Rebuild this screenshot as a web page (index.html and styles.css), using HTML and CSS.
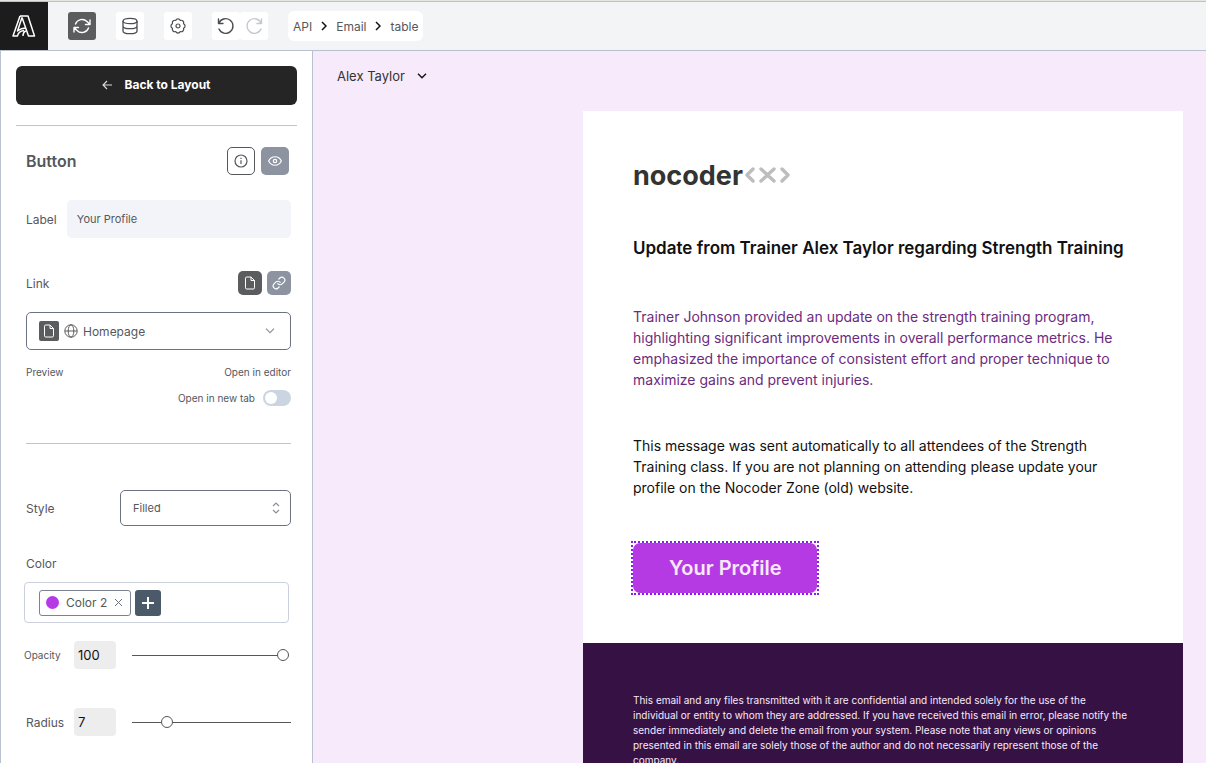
FILE: index.html
```html
<!DOCTYPE html>
<html lang="en">
<head>
<meta charset="utf-8">
<meta name="viewport" content="width=device-width, initial-scale=1">
<title>Email editor</title>
<link rel="stylesheet" href="styles.css">
</head>
<body>
<div class="app">
  <header class="topbar">
    <a class="brand" href="#" aria-label="Home">
      <svg width="26" height="26" viewBox="0 0 26 26" fill="none" stroke="#fff" stroke-width="1.500" stroke-linejoin="round"><path d="M9 3h8l6.500 20h-6L11 4.500M9 3L2 23h4.500c.5-3 3-5 6.500-5.500M11 4.500L6.500 18c2.500-2 4.500-3 8-3M15.500 17.500c-2.500 1-3.500 3-3.500 5.500"/></svg>
    </a>
    <nav class="tools" aria-label="Tools">
      <button class="tool tool-active" aria-label="Sync">
        <svg width="18" height="18" viewBox="0 0 18 18" fill="none" stroke="currentColor" stroke-width="1.4" stroke-linecap="round" stroke-linejoin="round"><path d="M17 3v4.500h-4.500M1 15v-4.500h4.500M2.500 7A7 7 0 0 1 14 4.500l3 3M15.500 11A7 7 0 0 1 4 13.500l-3-3"/></svg>
      </button>
      <button class="tool" aria-label="Data">
        <svg width="18" height="18" viewBox="0 0 18 18" fill="none" stroke="currentColor" stroke-width="1.3"><ellipse cx="9" cy="4" rx="7" ry="2.700"/><path d="M2 4v10c0 1.500 3.100 2.700 7 2.700s7-1.200 7-2.700V4M2 9c0 1.500 3.100 2.700 7 2.700S16 10.500 16 9"/></svg>
      </button>
      <button class="tool" aria-label="Settings">
        <svg width="18" height="18" viewBox="-9 -9 18 18" fill="none" stroke="currentColor" stroke-width="1.200" stroke-linejoin="round"><circle r="2"/><path d="M-2.300-5.540A2.500 2.500 0 0 1 2.300-5.540A2.500 2.500 0 0 1 5.540-2.300A2.500 2.500 0 0 1 5.540 2.300A2.500 2.500 0 0 1 2.300 5.540A2.500 2.500 0 0 1-2.300 5.540A2.500 2.500 0 0 1-5.540 2.300A2.500 2.500 0 0 1-5.540-2.300A2.500 2.500 0 0 1-2.300-5.540z"/></svg>
      </button>
      <div class="tool-pair">
        <button class="tool" aria-label="Undo">
          <svg width="18" height="18" viewBox="0 0 18 18" fill="none" stroke="currentColor" stroke-width="1.400" stroke-linecap="round" stroke-linejoin="round"><path d="M1.500 2v4.500H6M1.800 6.500A7.300 7.300 0 1 1 2 12"/></svg>
        </button>
        <button class="tool tool-faded" aria-label="Redo" disabled>
          <svg width="18" height="18" viewBox="0 0 18 18" fill="none" stroke="currentColor" stroke-width="1.400" stroke-linecap="round" stroke-linejoin="round"><path d="M16.500 2v4.500H12M16.200 6.500A7.300 7.300 0 1 0 16 12"/></svg>
        </button>
      </div>
    </nav>
    <nav class="crumbs" aria-label="Breadcrumb">
      <a href="#">API</a>
      <svg width="6" height="10" viewBox="0 0 6 10" fill="none" stroke="#111" stroke-width="1.500"><path d="M1 1l4 4-4 4"/></svg>
      <a href="#">Email</a>
      <svg width="6" height="10" viewBox="0 0 6 10" fill="none" stroke="#111" stroke-width="1.500"><path d="M1 1l4 4-4 4"/></svg>
      <a href="#">table</a>
    </nav>
  </header>

  <div class="workspace">
    <aside class="sidebar">
      <button class="back">
        <svg width="10" height="10" viewBox="0 0 10 10" fill="none" stroke="#ddd" stroke-width="1.100"><path d="M10 5H1M5 1L1 5l4 4"/></svg>
        Back to Layout
      </button>
      <hr class="rule">
      <form class="panel">
        <div class="row heading-row">
          <h2 class="heading">Button</h2>
          <div class="pair">
            <button type="button" class="square outlined" aria-label="Info">
              <svg width="14" height="14" viewBox="0 0 14 14" fill="none" stroke="currentColor" stroke-width="1.200"><circle cx="7" cy="7" r="6"/><path d="M7 6.200V10M7 3.800V5"/></svg>
            </button>
            <button type="button" class="square slate" aria-label="Visibility">
              <svg width="14" height="14" viewBox="0 0 14 14" fill="none" stroke="currentColor" stroke-width="1.200"><path d="M.6 7C3.500.8 10.500.8 13.400 7 10.500 13.200 3.500 13.200.6 7z" transform="translate(0 0.700) scale(1 .9)"/><circle cx="7" cy="7" r="1.700"/></svg>
            </button>
          </div>
        </div>

        <div class="row label-row">
          <label for="label">Label</label>
          <input class="text-field" id="label" type="text" value="Your Profile">
        </div>

        <div class="row link-row">
          <label for="page">Link</label>
          <div class="pair pair-tight">
            <button type="button" class="mini dark" aria-label="Page link">
              <svg width="12" height="14" viewBox="0 0 12 14" fill="none" stroke="currentColor" stroke-linejoin="round"><path d="M1.500 2.200Q1.500 1 2.700 1H7l3.500 3.500v7.300q0 1.200-1.200 1.200H2.700q-1.200 0-1.200-1.200zM7 1v3.500h3.500"/></svg>
            </button>
            <button type="button" class="mini slate" aria-label="URL link">
              <svg width="14" height="14" viewBox="0 0 24 24" fill="none" stroke="currentColor" stroke-width="2" stroke-linecap="round" stroke-linejoin="round"><path d="M10 13a5 5 0 0 0 7.540.540l3-3a5 5 0 0 0-7.070-7.070l-1.720 1.710M14 11a5 5 0 0 0-7.540-.540l-3 3a5 5 0 0 0 7.070 7.070l1.710-1.710"/></svg>
            </button>
          </div>
        </div>

        <div class="page-select">
          <span class="page-icon">
            <svg width="12" height="14" viewBox="0 0 12 14" fill="none" stroke="currentColor" stroke-linejoin="round"><path d="M1.500 2.200Q1.500 1 2.700 1H7l3.500 3.500v7.300q0 1.200-1.200 1.200H2.700q-1.200 0-1.200-1.200zM7 1v3.500h3.500"/></svg>
          </span>
          <svg width="14" height="14" viewBox="0 0 14 14" fill="none" stroke="#5b5c5e"><circle cx="7" cy="7" r="6.200"/><ellipse cx="7" cy="7" rx="2.800" ry="6.200"/><path d="M1 7h12"/></svg>
          <select id="page"><option>Homepage</option></select>
          <svg width="10" height="6" viewBox="0 0 10 6" fill="none" stroke="#8d93a1" stroke-width="1.200"><path d="M1 .7l4 4 4-4"/></svg>
        </div>

        <div class="row small-row">
          <a href="#">Preview</a>
          <a href="#">Open in editor</a>
        </div>
        <div class="toggle-row">
          <label for="newtab">Open in new tab</label>
          <input class="toggle" id="newtab" type="checkbox">
        </div>
        <hr class="rule inner-rule">

        <div class="row style-row">
          <label for="style">Style</label>
          <div class="style-select">
            <select id="style"><option>Filled</option></select>
            <svg width="8" height="12" viewBox="0 0 8 12" fill="none" stroke="#8a8f98" stroke-width="1.200"><path d="M1 4l3-3 3 3M1 8l3 3 3-3"/></svg>
          </div>
        </div>

        <div class="color-title">Color</div>
        <div class="color-box">
          <span class="chip">
            <span class="dot"></span>
            Color 2
            <button type="button" class="remove" aria-label="Remove Color 2">
              <svg width="9" height="9" viewBox="0 0 9 9" stroke="#6b7280"><path d="M1 1l7 7M8 1l-7 7"/></svg>
            </button>
          </span>
          <button type="button" class="add" aria-label="Add color">
            <svg width="12" height="12" viewBox="0 0 12 12" stroke="#fff" stroke-width="2"><path d="M6 0v12M0 6h12"/></svg>
          </button>
        </div>

        <div class="slider-row opacity-row">
          <label class="small-label" for="opacity">Opacity</label>
          <input class="number" id="opacity" type="text" value="100">
          <input class="range" type="range" min="0" max="100" value="100" aria-label="Opacity">
        </div>
        <div class="slider-row radius-row">
          <label for="radius">Radius</label>
          <input class="number" id="radius" type="text" value="7">
          <input class="range" type="range" min="0" max="35" value="7" aria-label="Radius">
        </div>
      </form>
    </aside>

    <main class="canvas">
      <button class="record">
        Alex Taylor
        <svg width="10" height="6" viewBox="0 0 10 6" fill="none" stroke="#111" stroke-width="1.400"><path d="M1 .7l4 4 4-4"/></svg>
      </button>
      <article class="email">
        <section class="email-body">
          <div class="logo">
            <span>nocoder</span>
            <svg width="47" height="18" viewBox="0 0 47 18" fill="none" stroke="#bdbdbd" stroke-width="3.400" stroke-linecap="round" stroke-linejoin="round"><path d="M9 3L3 9l6 6M17 3l13 12M30 3L17 15M38 3l6 6-6 6"/></svg>
          </div>
          <h1 class="subject">Update from Trainer Alex Taylor regarding Strength Training</h1>
          <p class="text text-purple">Trainer Johnson provided an update on the strength training program, highlighting significant improvements in overall performance metrics. He emphasized the importance of consistent effort and proper technique to maximize gains and prevent injuries.</p>
          <p class="text">This message was sent automatically to all attendees of the Strength Training class. If you are not planning on attending please update your profile on the Nocoder Zone (old) website.</p>
          <div class="selection"><a class="cta" href="#">Your Profile</a></div>
        </section>
        <footer class="email-footer">
          <p>This email and any files transmitted with it are confidential and intended solely for the use of the individual or entity to whom they are addressed. If you have received this email in error, please notify the sender immediately and delete the email from your system. Please note that any views or opinions presented in this email are solely those of the author and do not necessarily represent those of the company.</p>
        </footer>
      </article>
    </main>
  </div>
</div>
</body>
</html>
```

FILE: styles.css
```css
* { box-sizing: border-box; }
body {
  margin: 0;
  font-family: Inter, "Liberation Sans", sans-serif;
  font-size: 12px;
  color: #55575b;
}
button, input, select { font: inherit; color: inherit; margin: 0; }
button { border: 0; padding: 0; background: none; cursor: pointer; }
a { color: inherit; text-decoration: none; }
svg { display: block; flex: none; }

.app { height: 100vh; display: flex; flex-direction: column; overflow: hidden; }

.topbar {
  flex: none;
  display: flex;
  align-items: center;
  height: 51px;
  padding-top: 1px;
  background: #f3f4f6;
  border-top: 1px solid #e3e5e0;
  border-bottom: 1px solid #b9c0ce;
  box-shadow: inset 0 1px #c0c4bb;
}
.brand {
  align-self: stretch;
  width: 48px;
  display: grid;
  place-items: center;
  background: #1c1c1c;
}
.tools { display: flex; gap: 20px; margin-left: 20px; }
.tool {
  width: 28px;
  height: 28px;
  display: grid;
  place-items: center;
  border-radius: 3px;
  background: #fff;
  color: #4b4c4f;
}
.tool-active { background: #5b5c5e; color: #fff; }
.tool-faded { color: #c3c8d1; }
.tool-pair { display: flex; }
.crumbs {
  display: flex;
  align-items: center;
  gap: 9px;
  height: 30px;
  margin-left: 20px;
  padding: 0 5px;
  border-radius: 6px;
  background: #fff;
}

.workspace { flex: 1; display: flex; min-height: 0; }
.sidebar {
  flex: none;
  width: 313px;
  padding: 15px;
  background: #fff;
  border: solid #b9c0ce;
  border-width: 0 1px;
  overflow: hidden;
}
.back {
  display: flex;
  align-items: center;
  justify-content: center;
  gap: 12px;
  width: 100%;
  height: 39px;
  padding-bottom: 2px;
  border-radius: 6px;
  background: #252525;
  color: #fff;
  font-weight: 700;
}
.rule { height: 1px; margin: 20px 0 0; border: 0; background: #bfc4d0; }
.inner-rule { margin-top: 37px; }
.panel { padding: 0 6px 0 10px; }
.row { display: flex; align-items: center; justify-content: space-between; }
.heading-row { margin: 21px 2px 0 0; }
.heading { margin: 0; font-size: 16px; font-weight: 600; }
.pair { display: flex; gap: 6px; }
.pair-tight { gap: 5px; }
.square, .mini { display: grid; place-items: center; border-radius: 5px; }
.square { width: 28px; height: 28px; }
.mini { width: 24px; height: 24px; }
.outlined { border: 1px solid #55575b; background: #fff; }
.slate { background: #8d93a1; color: #fff; }
.dark { background: #5b5c5e; color: #fff; }

.label-row { margin-top: 25px; gap: 10px; }
.text-field {
  flex: 1;
  min-width: 0;
  height: 38px;
  padding: 0 10px;
  border: 0;
  border-radius: 5px;
  background: #f3f4f9;
  font-size: 11px;
}
.link-row { margin-top: 33px; }
select {
  flex: 1;
  min-width: 0;
  appearance: none;
  border: 0;
  padding: 0;
  background: none;
  outline: 0;
}
.page-select, .style-select {
  display: flex;
  align-items: center;
  border: 1px solid #6b7280;
  border-radius: 5px;
  padding: 0 15px 0 12px;
}
.page-select { height: 38px; margin-top: 17px; gap: 5px; }
.page-icon {
  display: grid;
  place-items: center;
  width: 20px;
  height: 20px;
  border-radius: 2px;
  background: #5b5c5e;
  color: #fff;
}
.small-row { margin-top: 15px; font-size: 10px; line-height: 14px; }
.toggle-row {
  display: flex;
  align-items: center;
  justify-content: flex-end;
  gap: 8px;
  margin-top: 11px;
  font-size: 10px;
}
.toggle {
  appearance: none;
  display: flex;
  width: 28px;
  height: 16px;
  padding: 2px;
  border-radius: 8px;
  background: #cbd5e1;
}
.toggle::before {
  content: "";
  width: 12px;
  height: 12px;
  border-radius: 50%;
  background: #fff;
}
.toggle:checked { justify-content: flex-end; }

.style-row { margin-top: 46px; }
.style-select { width: 171px; height: 36px; padding: 0 10px 0 12px; font-size: 11px; }
.color-title { margin-top: 30px; line-height: 16px; }
.color-box {
  display: flex;
  align-items: center;
  gap: 4px;
  height: 41px;
  margin: 10px 2px 0 -2px;
  padding: 0 14px;
  border: 1px solid #ccd0dc;
  border-radius: 4px;
}
.chip {
  display: flex;
  align-items: center;
  gap: 7px;
  height: 26px;
  padding: 0 7px 0 6px;
  border: 1px solid #7c8291;
  border-radius: 3px;
}
.dot { width: 13px; height: 13px; border-radius: 50%; background: #b63ae3; }
.add {
  display: grid;
  place-items: center;
  width: 26px;
  height: 26px;
  border-radius: 3px;
  background: #4b5a68;
}

.slider-row {
  display: grid;
  grid-template-columns: 48px 42px 1fr;
  align-items: center;
}
.opacity-row { margin: 18px 2px 0 -2px; grid-template-columns: 50px 42px 1fr; }
.radius-row { margin-top: 39px; }
.small-label { font-size: 10px; }
.number {
  width: 42px;
  height: 28px;
  padding: 0 4px;
  border: 0;
  border-radius: 4px;
  background: #ededed;
  color: #111;
  font-size: 13px;
}
.range {
  appearance: none;
  width: auto;
  min-width: 0;
  height: 12px;
  margin-left: 16px;
  background: linear-gradient(#55575b, #55575b) center / 100% 1px no-repeat;
}
.range::-webkit-slider-thumb {
  appearance: none;
  width: 12px;
  height: 12px;
  border: 1px solid #55575b;
  border-radius: 50%;
  background: #fff;
}

.canvas { flex: 1; min-width: 0; background: #f7eafb; overflow: hidden; }
.record {
  display: flex;
  align-items: center;
  gap: 12px;
  margin: 16px 24px 0;
  height: 18px;
  color: #333;
  font-size: 13px;
}
.email { max-width: 600px; margin: 26px 23px 0 auto; background: #fff; }
.email-body { padding: 50px 50px 48px; color: #111; }
.logo { display: flex; align-items: center; gap: 1px; height: 28px; }
.logo span { color: #333; font-size: 27px; font-weight: 700; }
.subject { margin: 46px 0 0; font-size: 17px; font-weight: 600; line-height: 26px; }
.text { margin: 45px 0 0; font-size: 14px; line-height: 21px; }
.text-purple { color: #6d2b80; }
.selection {
  width: fit-content;
  margin: 43px 0 0 -2px;
  border: 2px dotted #8b1cf0;
}
.cta {
  display: block;
  padding: 12px 36px;
  border-radius: 7px;
  background: #b63ae3;
  color: #f7e9fb;
  font-size: 20px;
  font-weight: 600;
  line-height: 26px;
}
.email-footer {
  padding: 50px;
  background: #361244;
  color: #f7e9fb;
  font-size: 10px;
  line-height: 15px;
}
.email-footer p { margin: 0; }
```
